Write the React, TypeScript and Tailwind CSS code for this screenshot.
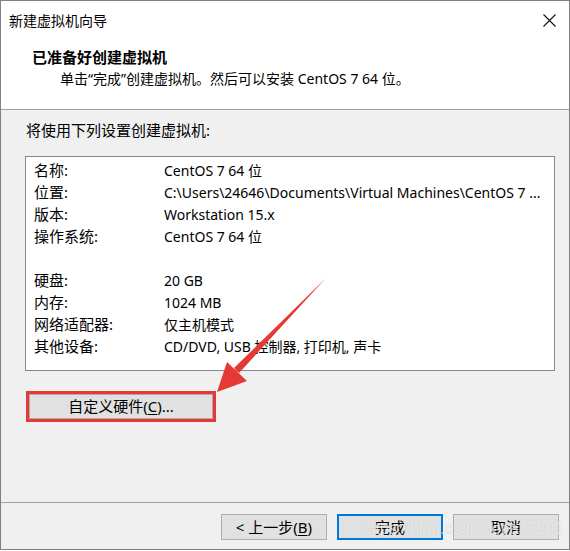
import React from "react";

const font = "font-['Noto_Sans','Noto_Sans_CJK_SC',sans-serif]";

const rows: [string, string][] = [
  ["名称:", "CentOS 7 64 位"],
  ["位置:", "C:\\Users\\24646\\Documents\\Virtual Machines\\CentOS 7 ..."],
  ["版本:", "Workstation 15.x"],
  ["操作系统:", "CentOS 7 64 位"],
];

const hw: [string, string][] = [
  ["硬盘:", "20 GB"],
  ["内存:", "1024 MB"],
  ["网络适配器:", "仅主机模式"],
  ["其他设备:", "CD/DVD, USB 控制器, 打印机, 声卡"],
];

function Row({ label, value }: { label: string; value: string }) {
  return (
    <div className="flex h-[22px] items-center whitespace-nowrap">
      <span className="w-[130px] text-[15px]">{label}</span>
      <span className="text-[14px]">{value}</span>
    </div>
  );
}

function Btn({ children, primary }: { children: React.ReactNode; primary?: boolean }) {
  return (
    <div
      className={
        "flex h-[26px] w-[106px] items-center justify-center bg-[#e1e1e1] text-[15px] text-black " +
        (primary ? "border-2 border-[#0078d7]" : "border border-[#adadad]")
      }
    >
      {children}
    </div>
  );
}

export default function App() {
  return (
    <div className={`relative h-[551px] w-[570px] bg-white text-black ${font}`}>
      <div className="flex h-[550px] w-[570px] flex-col border border-[#808080]">
        {/* title bar + header */}
        <div className="h-[109px] border-b border-[#a0a0a0] bg-white">
          <div className="flex h-[39px] items-center justify-between pl-[8px] pr-[13px]">
            <span className="text-[14px]">新建虚拟机向导</span>
            <svg width="13" height="13" viewBox="0 0 13 13" className="mb-[1px]">
              <path d="M0.5 0.5 L12.5 12.5 M12.5 0.5 L0.5 12.5" stroke="#111" strokeWidth="1.1" />
            </svg>
          </div>
          <div className="pl-[31px] pt-[6px]">
            <div className="text-[15px] font-bold leading-[22px]">已准备好创建虚拟机</div>
            <div className="pl-[28px] text-[14px] leading-[22px]">
              单击“完成”创建虚拟机。然后可以安装 CentOS 7 64 位。
            </div>
          </div>
        </div>

        {/* body */}
        <div className="flex flex-1 flex-col bg-[#f0f0f0]">
          <div className="pl-[25px] pt-[9px] text-[15px] leading-[22px]">将使用下列设置创建虚拟机:</div>
          <div className="ml-[24px] mt-[15px] h-[215px] w-[530px] border border-[#828790] bg-white pl-[8px] pt-[2px]">
            {rows.map(([l, v]) => (
              <Row key={l} label={l} value={v} />
            ))}
            <div className="h-[22px]" />
            {hw.map(([l, v]) => (
              <Row key={l} label={l} value={v} />
            ))}
          </div>

          <div className="ml-[25px] mt-[20px] h-[31px] w-[190px] border-[3px] border-[#e53935]">
            <div className="flex h-full w-full items-center justify-center border border-[#adadad] bg-[#e1e1e1] text-[15px]">
              自定义硬件(<span className="underline underline-offset-2">C</span>)...
            </div>
          </div>

          <div className="mt-auto h-[47px] border-t border-[#a0a0a0]">
            <div className="flex justify-end gap-[10px] pr-[10px] pt-[11px]">
              <Btn>
                &lt; 上一步(<span className="underline underline-offset-2">B</span>)
              </Btn>
              <Btn primary>完成</Btn>
              <Btn>取消</Btn>
            </div>
          </div>
        </div>
      </div>

      {/* red arrow annotation */}
      <svg className="pointer-events-none absolute left-0 top-0" width="570" height="551">
        <polygon points="326,278 239,373 234,368" fill="#e53935" />
        <polygon points="217,392 227,362 247,381" fill="#e53935" />
      </svg>

      {/* watermark */}
      <div className="pointer-events-none absolute left-[362px] top-[517px] whitespace-nowrap font-['Liberation_Sans',sans-serif] text-[16px] text-white/70 [text-shadow:0_0_1px_rgba(0,0,0,0.2)]">
        https://blog.csdn.net/a37201
      </div>
    </div>
  );
}
